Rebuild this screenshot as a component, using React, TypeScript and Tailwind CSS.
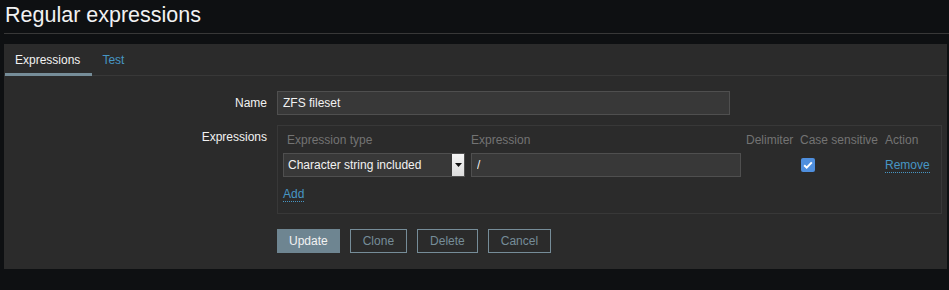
const font = { fontFamily: '"Liberation Sans", Arial, sans-serif' }

const inputClass =
  'h-[24px] border border-[#4f4f4f] bg-[#383838] px-[5px] text-[12px] leading-[22px] text-[#f2f2f2] outline-none'

const altButton =
  'h-[24px] border border-[#768d99] px-[12px] text-[12px] text-[#768d99] leading-[22px]'

export default function App() {
  return (
    <div style={font} className="min-h-[290px] w-[949px] bg-[#0e1012] text-[12px] text-[#f2f2f2]">
      <div className="ml-[4px] h-[34px] border-b border-[#383838] pt-[3px]">
        <h1 className="pl-[1px] text-[21.5px] leading-[24px] font-normal">Regular expressions</h1>
      </div>

      <div className="mt-[10px] ml-[4px] w-[943px] bg-[#2b2b2b] pb-[16px]">
        <div className="flex h-[32px] border-b border-[#383838] pl-[1px]">
          <div className="mb-[-1px] h-[32px] border-b-[3px] border-[#768d99] pr-[12px] pl-[10px] pt-[9px] leading-[14px]">
            Expressions
          </div>
          <div className="px-[10px] pt-[9px] leading-[14px] text-[#4796c4]">Test</div>
        </div>

        <div className="pt-[15px]">
          <FormRow label="Name" center>
            <input className={`${inputClass} w-[453px]`} defaultValue="ZFS fileset" readOnly />
          </FormRow>

          <FormRow label="Expressions">
            <div className="w-[665px] border border-[#383838] px-[5px] pt-[2px] pb-[7px]">
              <div className="flex h-[24px] items-center text-[#737373]">
                <div className="w-[188px] pl-[4px]">Expression type</div>
                <div className="w-[275px]">Expression</div>
                <div className="w-[54px]">Delimiter</div>
                <div className="w-[85px]">Case sensitive</div>
                <div>Action</div>
              </div>
              <div className="mt-[1px] flex h-[24px] items-center">
                <div className="w-[188px]">
                  <SelectBox value="Character string included" />
                </div>
                <div className="w-[329px]">
                  <input className={`${inputClass} w-[270px]`} defaultValue="/" readOnly />
                </div>
                <div className="w-[85px] pl-[1px]">
                  <Checkbox />
                </div>
                <a className="border-b border-dotted border-[#4796c4] leading-[14px] text-[#4796c4]">Remove</a>
              </div>
              <div className="mt-[5px] flex h-[24px] items-center pt-[1px]">
                <a className="border-b border-dotted border-[#4796c4] leading-[14px] text-[#4796c4]">Add</a>
              </div>
            </div>
          </FormRow>

          <div className="mt-[15px] flex gap-[10px] pl-[273px]">
            <button type="button" className="h-[24px] bg-[#6e8591] px-[12px] text-[12px] leading-[24px] text-[#f2f2f2]">
              Update
            </button>
            <button type="button" className={altButton}>
              Clone
            </button>
            <button type="button" className={altButton}>
              Delete
            </button>
            <button type="button" className={altButton}>
              Cancel
            </button>
          </div>
        </div>
      </div>
    </div>
  )
}

function FormRow({ label, center, children }: { label: string; center?: boolean; children: React.ReactNode }) {
  return (
    <div className={`mb-[10px] flex ${center ? 'items-center' : 'items-start'}`}>
      <div className="h-[24px] w-[273px] pr-[10px] text-right leading-[24px]">{label}</div>
      {children}
    </div>
  )
}

function SelectBox({ value }: { value: string }) {
  return (
    <div className="flex h-[24px] w-[182px] border border-[#4f4f4f] bg-[#383838]">
      <div className="flex-1 pl-[4px] leading-[22px] text-[#f2f2f2]">{value}</div>
      <div className="flex w-[12px] items-center justify-center bg-gradient-to-b from-[#f5f5f5] to-[#dcdcdc]">
        <svg width="7" height="4" viewBox="0 0 7 4">
          <path d="M0 0h7L3.5 4z" fill="#111" />
        </svg>
      </div>
    </div>
  )
}

function Checkbox() {
  return (
    <div className="flex h-[14px] w-[14px] items-center justify-center rounded-[2px] bg-[#4f8fde]">
      <svg width="10" height="8" viewBox="0 0 10 8">
        <path d="M1.2 4.2l2.5 2.4L8.8 1.4" stroke="#fff" strokeWidth="2" fill="none" />
      </svg>
    </div>
  )
}
